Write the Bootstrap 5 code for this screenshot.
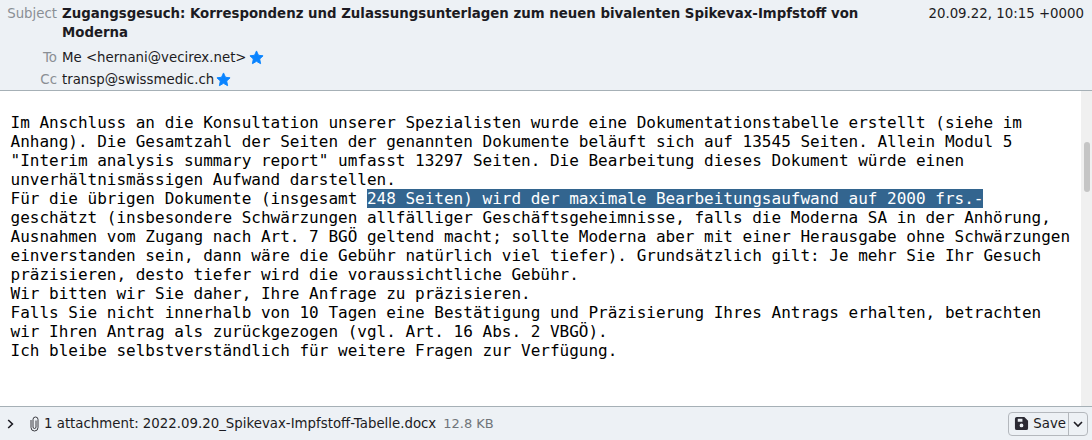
<!DOCTYPE html>
<html lang="en">
<head>
  <meta charset="UTF-8" />
  <title>Message</title>
  <link rel="stylesheet" href="https://cdn.jsdelivr.net/npm/bootstrap@5.3.0/dist/css/bootstrap.min.css" />
  <style>
    html, body { height: 440px; overflow: hidden; }
    body { font-family: "DejaVu Sans", sans-serif; font-size: 13.33px; color: #1c1b22; background: #fff; }
    .msg-head { height: 91px; background: #edf1f5; border-bottom: 1px solid #a6b0b6; padding: 4px 0 0 0; }
    .head-label { width: 57px; text-align: right; color: #8a8f94; flex: none; }
    .head-row { gap: 5px; line-height: 19px; }
    .subject-text { font-weight: 700; width: 820px; flex: none; line-height: 19px; }
    .msg-date { margin-left: auto; padding-right: 8px; white-space: nowrap; }
    .to-row { margin-top: 6px; }
    .cc-row { margin-top: 3px; }
    .addr-cell { gap: 2px; }
    .star-icon { width: 15px; height: 15px; fill: #0a84ff; flex: none; }
    .msg-main { height: 315px; }
    .msg-text { flex: 1; margin: 0; padding: 22px 0 0 10.5px; font-family: "DejaVu Sans Mono", monospace; font-size: 16px; line-height: 19px; color: #000; white-space: pre; overflow: hidden; }
    .msg-text span { background: #33658f; color: #fff; }
    .scroll-track { width: 11px; background: #f0f0f0; flex: none; padding: 51px 2px 0 3px; }
    .scroll-thumb { height: 50px; background: #c5c5c5; border-radius: 4px; }
    .msg-foot { height: 34px; background: #edf1f5; border-top: 1px solid #a6b0b6; padding: 0 4px 0 6px; }
    .chev-icon { width: 10px; height: 10px; flex: none; }
    .clip-icon { width: 9px; height: 16px; flex: none; margin-left: 14px; margin-right: 5px; }
    .attach-size { color: #70757a; margin-left: 7px; font-size: 13px; }
    .save-group { margin-left: auto; height: 24px; border: 1px solid #b4b8bd; border-radius: 4px; background: #edf1f5; }
    .save-main { padding: 0 2px 0 5px; gap: 4px; border-right: 1px solid #b4b8bd; }
    .save-more { width: 18px; }
    .save-icon { width: 15px; height: 15px; fill: #2b2a33; }
  </style>
</head>
<body>
  <div class="msg-head">
    <div class="d-flex head-row">
      <div class="head-label">Subject</div>
      <div class="subject-text">Zugangsgesuch: Korrespondenz und Zulassungsunterlagen zum neuen bivalenten Spikevax-Impfstoff von Moderna</div>
      <div class="msg-date">20.09.22, 10:15 +0000</div>
    </div>
    <div class="d-flex head-row to-row align-items-center">
      <div class="head-label">To</div>
      <div class="d-flex align-items-center addr-cell">Me &lt;hernani@vecirex.net&gt;
        <svg class="star-icon" viewBox="0 0 16 16"><path d="M8 1 10.1 5.6 15 6.2 11.4 9.6 12.4 14.6 8 12.1 3.6 14.6 4.6 9.6 1 6.2 5.9 5.6Z" stroke="#0a84ff" stroke-linejoin="round"/></svg>
      </div>
    </div>
    <div class="d-flex head-row cc-row align-items-center">
      <div class="head-label">Cc</div>
      <div class="d-flex align-items-center addr-cell">transp@swissmedic.ch
        <svg class="star-icon" viewBox="0 0 16 16"><path d="M8 1 10.1 5.6 15 6.2 11.4 9.6 12.4 14.6 8 12.1 3.6 14.6 4.6 9.6 1 6.2 5.9 5.6Z" stroke="#0a84ff" stroke-linejoin="round"/></svg>
      </div>
    </div>
  </div>
  <div class="d-flex msg-main">
    <pre class="msg-text">Im Anschluss an die Konsultation unserer Spezialisten wurde eine Dokumentationstabelle erstellt (siehe im
Anhang). Die Gesamtzahl der Seiten der genannten Dokumente beläuft sich auf 13545 Seiten. Allein Modul 5
"Interim analysis summary report" umfasst 13297 Seiten. Die Bearbeitung dieses Dokument würde einen
unverhältnismässigen Aufwand darstellen.
Für die übrigen Dokumente (insgesamt <span>248 Seiten) wird der maximale Bearbeitungsaufwand auf 2000 frs.-</span>
geschätzt (insbesondere Schwärzungen allfälliger Geschäftsgeheimnisse, falls die Moderna SA in der Anhörung,
Ausnahmen vom Zugang nach Art. 7 BGÖ geltend macht; sollte Moderna aber mit einer Herausgabe ohne Schwärzungen
einverstanden sein, dann wäre die Gebühr natürlich viel tiefer). Grundsätzlich gilt: Je mehr Sie Ihr Gesuch
präzisieren, desto tiefer wird die voraussichtliche Gebühr.
Wir bitten wir Sie daher, Ihre Anfrage zu präzisieren.
Falls Sie nicht innerhalb von 10 Tagen eine Bestätigung und Präzisierung Ihres Antrags erhalten, betrachten
wir Ihren Antrag als zurückgezogen (vgl. Art. 16 Abs. 2 VBGÖ).
Ich bleibe selbstverständlich für weitere Fragen zur Verfügung.</pre>
    <div class="scroll-track"><div class="scroll-thumb"></div></div>
  </div>
  <div class="msg-foot d-flex align-items-center">
    <svg class="chev-icon" viewBox="0 0 10 10"><path d="M2.2 1 6.4 5 2.2 9" fill="none" stroke="#1c1b22" stroke-width="1.6"/></svg>
    <svg class="clip-icon" viewBox="0 0 9 16"><path d="M1 4V11.5A3.5 3.5 0 0 0 8 11.5V3.5A2.5 2.5 0 0 0 3 3.5V11A1.5 1.5 0 0 0 6 11V4.5" fill="none" stroke="#3a3a40" stroke-width="1"/></svg>
    <span>1 attachment: 2022.09.20_Spikevax-Impfstoff-Tabelle.docx</span>
    <span class="attach-size">12.8 KB</span>
    <div class="save-group d-flex align-items-center">
      <div class="save-main d-flex align-items-center h-100">
        <svg class="save-icon" viewBox="0 0 16 16"><path fill-rule="evenodd" d="M3 1H11L15 5V13A2 2 0 0 1 13 15H3A2 2 0 0 1 1 13V3A2 2 0 0 1 3 1ZM8 8A2 2 0 1 0 8 12 2 2 0 0 0 8 8ZM4 3V6H9V3Z"/></svg>
        Save
      </div>
      <div class="save-more d-flex align-items-center justify-content-center h-100">
        <svg class="chev-icon" viewBox="0 0 10 10"><path d="M1 3 5 7 9 3" fill="none" stroke="#1c1b22" stroke-width="1.6"/></svg>
      </div>
    </div>
  </div>
  <script src="https://cdn.jsdelivr.net/npm/bootstrap@5.3.0/dist/js/bootstrap.bundle.min.js"></script>
</body>
</html>
